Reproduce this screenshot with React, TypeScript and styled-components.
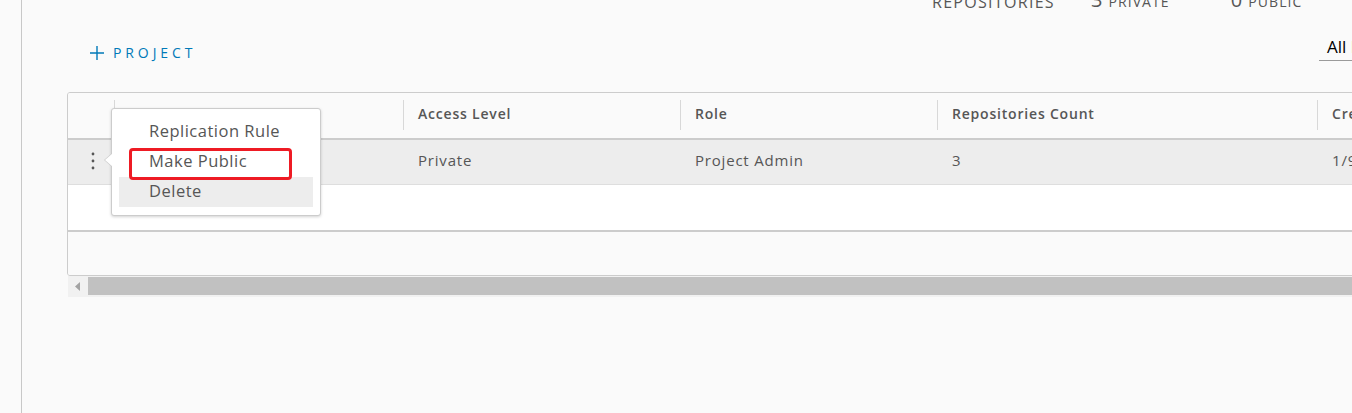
import React from "react";
import styled, { createGlobalStyle } from "styled-components";

const GlobalStyle = createGlobalStyle`
  html, body { margin: 0; padding: 0; background: #fafafa; overflow: hidden; }
  body { font-family: "Open Sans", "Liberation Sans", sans-serif; color: #565656; }
  * { box-sizing: border-box; }
`;

const Page = styled.div`
  display: flex;
  width: 1352px;
  height: 413px;
  overflow: hidden;
  background: #fafafa;
`;

const Sidebar = styled.div`
  flex: 0 0 22px;
  border-right: 1px solid #c8c8c8;
`;

const Main = styled.div`
  flex: 1;
  min-width: 0;
  padding-left: 45px;
  display: flex;
  flex-direction: column;
`;

const StatsBar = styled.div`
  height: 16px;
  display: flex;
  align-items: flex-end;
  padding-left: 865px;
  white-space: nowrap;
`;

const StatGroup = styled.div<{ $gap: number }>`
  display: flex;
  align-items: baseline;
  gap: 6px;
  margin-right: ${(p) => p.$gap}px;
  margin-top: -27px;
  transform: translateY(-3px);
`;

const StatTitle = styled.span`
  font-size: 16px;
  letter-spacing: 1.3px;
  color: #565656;
  text-transform: uppercase;
`;

const StatLabel = styled.span`
  font-size: 14px;
  letter-spacing: 1.1px;
  color: #565656;
  text-transform: uppercase;
`;

const StatNumber = styled.span`
  font-size: 20px;
  color: #565656;
`;

const Toolbar = styled.div`
  height: 76px;
  display: flex;
  align-items: flex-start;
  justify-content: space-between;
  width: 1400px;
`;

const AddButton = styled.button`
  margin-top: 27px;
  margin-left: 22px;
  display: flex;
  align-items: center;
  gap: 8px;
  background: none;
  border: 0;
  padding: 0;
  color: #0079b8;
  font-family: "Open Sans", "Liberation Sans", sans-serif;
  font-size: 14px;
  font-weight: 500;
  letter-spacing: 3.9px;
  text-transform: uppercase;
  cursor: pointer;
`;

const FilterSelect = styled.div`
  margin-top: 19px;
  margin-right: 48px;
  width: 100px;
  height: 26px;
  padding-left: 8px;
  border-bottom: 1px solid #9a9a9a;
  font-size: 17px;
  color: #000;
  line-height: 24px;
  white-space: nowrap;
`;

const GridWrap = styled.div`
  position: relative;
  width: 1400px;
`;

const Grid = styled.div`
  border: 1px solid #cccccc;
  border-radius: 3px;
  background: #fafafa;
  overflow: hidden;
`;

const COLS = "46px 289px 277px 257px 380px 150px";

const HeaderRow = styled.div`
  display: grid;
  grid-template-columns: ${COLS};
  height: 47px;
  border-bottom: 2px solid #cccccc;
  background: #fafafa;
`;

const HeaderCell = styled.div<{ $sep?: boolean }>`
  position: relative;
  display: flex;
  align-items: center;
  padding: 0 0 4px 15px;
  font-size: 14px;
  font-weight: 600;
  letter-spacing: 0.8px;
  color: #565656;
  white-space: nowrap;
  &::before {
    content: "";
    display: ${(p) => (p.$sep ? "block" : "none")};
    position: absolute;
    left: 0;
    top: 7px;
    bottom: 8px;
    width: 1px;
    background: #d8d8d8;
  }
`;

const BodyRow = styled.div`
  display: grid;
  grid-template-columns: ${COLS};
  height: 45px;
  background: #ededed;
  border-bottom: 1px solid #dedede;
`;

const Cell = styled.div`
  display: flex;
  align-items: center;
  padding: 0 0 4px 15px;
  font-size: 15px;
  letter-spacing: 0.8px;
  color: #565656;
  white-space: nowrap;
`;

const ActionCell = styled.div`
  display: flex;
  align-items: center;
  justify-content: center;
  padding: 0 0 2px 4px;
`;

const EmptyArea = styled.div`
  height: 47px;
  background: #ffffff;
  border-bottom: 2px solid #cccccc;
`;

const Footer = styled.div`
  height: 43px;
  background: #fafafa;
`;

const ScrollBar = styled.div`
  display: flex;
  height: 21px;
  margin-left: 1px;
  background: #f1f1f1;
`;

const ScrollArrow = styled.div`
  flex: 0 0 20px;
  display: flex;
  align-items: center;
  justify-content: center;
`;

const ScrollThumb = styled.div`
  flex: 1;
  margin: 1px 0 2px;
  background: #c1c1c1;
`;

const Menu = styled.div`
  position: absolute;
  left: 44px;
  top: 16px;
  width: 210px;
  padding: 8px 7px;
  background: #ffffff;
  border: 1px solid #cccccc;
  border-radius: 3px;
  box-shadow: 0 1px 3px rgba(0, 0, 0, 0.18);
  &::before {
    content: "";
    position: absolute;
    left: -8px;
    top: 44px;
    border-style: solid;
    border-width: 7px 8px 7px 0;
    border-color: transparent #cccccc transparent transparent;
  }
  &::after {
    content: "";
    position: absolute;
    left: -7px;
    top: 44px;
    border-style: solid;
    border-width: 7px 8px 7px 0;
    border-color: transparent #ffffff transparent transparent;
  }
`;

const MenuItem = styled.div<{ $active?: boolean }>`
  height: 30px;
  display: flex;
  align-items: center;
  padding: 0 0 4px 30px;
  font-size: 16.5px;
  letter-spacing: 0.5px;
  color: #565656;
  background: ${(p) => (p.$active ? "#ededed" : "transparent")};
`;

const Highlight = styled.div`
  position: absolute;
  left: 17px;
  top: 39px;
  width: 163px;
  height: 32px;
  border: 3px solid #ee1b24;
  border-radius: 4px;
  pointer-events: none;
`;

const PlusIcon = () => (
  <svg width="16" height="16" viewBox="0 0 16 16">
    <path d="M8 1v14M1 8h14" stroke="#0079b8" strokeWidth="1.4" fill="none" />
  </svg>
);

const DotsIcon = () => (
  <svg width="4" height="18" viewBox="0 0 4 18">
    <circle cx="2" cy="2" r="1.4" fill="#565656" />
    <circle cx="2" cy="9" r="1.4" fill="#565656" />
    <circle cx="2" cy="16" r="1.4" fill="#565656" />
  </svg>
);

const ArrowLeft = () => (
  <svg width="6" height="9" viewBox="0 0 6 9">
    <path d="M5 0v9L0 4.5z" fill="#a3a3a3" />
  </svg>
);

export default function App() {
  return (
    <>
      <GlobalStyle />
      <Page>
        <Sidebar />
        <Main>
          <StatsBar>
            <StatGroup $gap={36}>
              <StatTitle>Repositories</StatTitle>
            </StatGroup>
            <StatGroup $gap={61}>
              <StatNumber>3</StatNumber>
              <StatLabel>Private</StatLabel>
            </StatGroup>
            <StatGroup $gap={0}>
              <StatNumber>0</StatNumber>
              <StatLabel>Public</StatLabel>
            </StatGroup>
          </StatsBar>
          <Toolbar>
            <AddButton>
              <PlusIcon />
              Project
            </AddButton>
            <FilterSelect>All Projects</FilterSelect>
          </Toolbar>
          <GridWrap>
            <Grid>
              <HeaderRow>
                <HeaderCell />
                <HeaderCell $sep />
                <HeaderCell $sep>Access Level</HeaderCell>
                <HeaderCell $sep>Role</HeaderCell>
                <HeaderCell $sep>Repositories Count</HeaderCell>
                <HeaderCell $sep>Creation Time</HeaderCell>
              </HeaderRow>
              <BodyRow>
                <ActionCell>
                  <DotsIcon />
                </ActionCell>
                <Cell />
                <Cell>Private</Cell>
                <Cell>Project Admin</Cell>
                <Cell>3</Cell>
                <Cell>1/9/18, 10:00 AM</Cell>
              </BodyRow>
              <EmptyArea />
              <Footer />
            </Grid>
            <ScrollBar>
              <ScrollArrow>
                <ArrowLeft />
              </ScrollArrow>
              <ScrollThumb />
            </ScrollBar>
            <Menu>
              <MenuItem>Replication Rule</MenuItem>
              <MenuItem>Make Public</MenuItem>
              <MenuItem $active>Delete</MenuItem>
              <Highlight />
            </Menu>
          </GridWrap>
        </Main>
      </Page>
    </>
  );
}
